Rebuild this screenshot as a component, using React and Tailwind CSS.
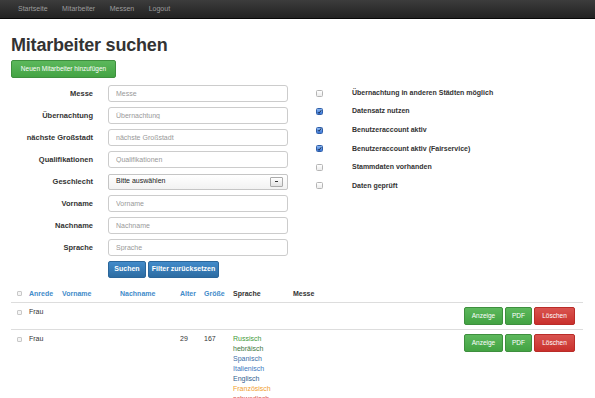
const fields = [
  { label: 'Messe', placeholder: 'Messe' },
  { label: 'Übernachtung', placeholder: 'Übernachtung' },
  { label: 'nächste Großstadt', placeholder: 'nächste Großstadt' },
  { label: 'Qualifikationen', placeholder: 'Qualifikationen' },
  { label: 'Geschlecht', select: true },
  { label: 'Vorname', placeholder: 'Vorname' },
  { label: 'Nachname', placeholder: 'Nachname' },
  { label: 'Sprache', placeholder: 'Sprache' },
];

const options = [
  { label: 'Übernachtung in anderen Städten möglich', checked: false },
  { label: 'Datensatz nutzen', checked: true },
  { label: 'Benutzeraccount aktiv', checked: true },
  { label: 'Benutzeraccount aktiv (Fairservice)', checked: true },
  { label: 'Stammdaten vorhanden', checked: false },
  { label: 'Daten geprüft', checked: false },
];

const languages = [
  { name: 'Russisch', color: 'text-[#3f9a3a]' },
  { name: 'hebräisch', color: 'text-[#3c763d]' },
  { name: 'Spanisch', color: 'text-[#3a6ea8]' },
  { name: 'Italienisch', color: 'text-[#3a78c0]' },
  { name: 'Englisch', color: 'text-[#31608f]' },
  { name: 'Französisch', color: 'text-[#f0a030]' },
  { name: 'schwedisch', color: 'text-[#d9534f]' },
];

function MacCheckbox({ checked }) {
  if (!checked) {
    return (
      <span className="block w-[7px] h-[7px] rounded-[1.5px] border border-[#b5b5b5] bg-gradient-to-b from-white to-[#ececec]" />
    );
  }
  return (
    <span className="flex items-center justify-center w-[7px] h-[7px] rounded-[1.5px] border border-[#2f5ea8] bg-gradient-to-b from-[#8ab6f0] to-[#3b76d6]">
      <svg viewBox="0 0 8 8" className="w-[6px] h-[6px]">
        <path d="M1.5 4.2 L3.3 6 L6.8 1.2" fill="none" stroke="#14233f" strokeWidth="1.4" />
      </svg>
    </span>
  );
}

function TinyBox() {
  return <span className="block w-[5px] h-[5px] border border-[#c8c8c8] bg-[#f5f5f5] rounded-[1px]" />;
}

function ActionButtons() {
  return (
    <div className="flex justify-end gap-[2px] pr-[8px]">
      <button className="w-[39px] h-[18px] rounded-[2px] bg-gradient-to-b from-[#5cb85c] to-[#43a343] border border-[#3e8f3e] text-white text-[6.5px]">
        Anzeige
      </button>
      <button className="w-[27px] h-[18px] rounded-[2px] bg-gradient-to-b from-[#5cb85c] to-[#43a343] border border-[#3e8f3e] text-white text-[6.5px]">
        PDF
      </button>
      <button className="w-[41px] h-[18px] rounded-[2px] bg-gradient-to-b from-[#d9534f] to-[#c9302c] border border-[#b92c28] text-white text-[6.5px]">
        Löschen
      </button>
    </div>
  );
}

export default function App() {
  return (
    <div className="w-[595px] h-[398px] overflow-hidden bg-white text-[#333] font-['Liberation_Sans',Arial,sans-serif]">
      {/* Navbar */}
      <nav className="h-[19px] bg-gradient-to-b from-[#3c3c3c] to-[#222] border-b border-[#080808] flex items-center pl-[18px] gap-[14.5px] text-[7px] text-[#9d9d9d]">
        <span>Startseite</span>
        <span>Mitarbeiter</span>
        <span>Messen</span>
        <span>Logout</span>
      </nav>

      <div className="px-[11px]">
        <h1 className="mt-[17px] text-[18px] leading-[18px] font-bold tracking-[-0.2px] text-[#333]">
          Mitarbeiter suchen
        </h1>
        <button className="mt-[5px] w-[105px] h-[18px] rounded-[2px] bg-gradient-to-b from-[#5cb85c] to-[#43a343] border border-[#3e8f3e] text-white text-[6.5px]">
          Neuen Mitarbeiter hinzufügen
        </button>

        {/* Search form */}
        <div className="flex mt-[7px]">
          <div className="w-[290px] flex flex-col gap-[5px]">
            {fields.map(f => (
              <div key={f.label} className="flex items-center h-[17px]">
                <label className="w-[82px] text-right text-[7.5px] font-bold text-[#333]">
                  {f.label}
                </label>
                {f.select ? (
                  <div className="ml-[15px] w-[180px] h-[16px] border border-[#c5c5c5] rounded-[2px] bg-gradient-to-b from-white to-[#f2f2f2] flex items-center justify-between pl-[7px] pr-[4px] text-[7px] text-[#222]">
                    <span>Bitte auswählen</span>
                    <span className="w-[13px] h-[10px] border border-[#aaa] rounded-[1px] bg-gradient-to-b from-white to-[#e2e2e2] flex items-center justify-center">
                      <span className="block w-[3px] h-[1.5px] bg-[#333]" />
                    </span>
                  </div>
                ) : (
                  <input
                    placeholder={f.placeholder}
                    className="ml-[15px] w-[180px] h-[17px] border border-[#ccc] rounded-[3px] px-[7px] text-[7px] placeholder:text-[#999] outline-none"
                  />
                )}
              </div>
            ))}
            <div className="flex gap-[2px] ml-[97px]">
              <button className="w-[38px] h-[17px] rounded-[2px] bg-gradient-to-b from-[#428bca] to-[#2d6ca2] border border-[#2b669a] text-white text-[7px] font-bold">
                Suchen
              </button>
              <button className="w-[71px] h-[17px] rounded-[2px] bg-gradient-to-b from-[#428bca] to-[#2d6ca2] border border-[#2b669a] text-white text-[7px] font-bold">
                Filter zurücksetzen
              </button>
            </div>
          </div>

          <div className="ml-[15px] mt-[3px] flex flex-col gap-[8.6px]">
            {options.map(o => (
              <div key={o.label} className="flex items-center h-[10px]">
                <MacCheckbox checked={o.checked} />
                <span className="ml-[29px] text-[7px] font-bold text-[#333]">{o.label}</span>
              </div>
            ))}
          </div>
        </div>

        {/* Results table */}
        <table className="mt-[8px] w-[572px] table-fixed border-collapse text-[7px]">
          <colgroup>
            <col className="w-[18px]" />
            <col className="w-[33px]" />
            <col className="w-[58px]" />
            <col className="w-[60px]" />
            <col className="w-[24px]" />
            <col className="w-[29px]" />
            <col className="w-[60px]" />
            <col className="w-[80px]" />
            <col />
          </colgroup>
          <thead>
            <tr className="border-b border-[#ddd] h-[16px] text-left font-bold">
              <th className="pl-[6px] align-middle"><TinyBox /></th>
              <th className="text-[#428bca]">Anrede</th>
              <th className="text-[#428bca]">Vorname</th>
              <th className="text-[#428bca]">Nachname</th>
              <th className="text-[#428bca]">Alter</th>
              <th className="text-[#428bca]">Größe</th>
              <th className="text-[#333]">Sprache</th>
              <th className="text-[#333]">Messe</th>
              <th />
            </tr>
          </thead>
          <tbody className="leading-[10px]">
            <tr className="border-b border-[#ddd] align-top">
              <td className="pl-[6px] pt-[7px]"><TinyBox /></td>
              <td className="pt-[4px]">Frau</td>
              <td />
              <td />
              <td />
              <td />
              <td />
              <td />
              <td className="pt-[4px] pb-[4px]"><ActionButtons /></td>
            </tr>
            <tr className="align-top">
              <td className="pl-[6px] pt-[7px]"><TinyBox /></td>
              <td className="pt-[4px]">Frau</td>
              <td />
              <td />
              <td className="pt-[4px]">29</td>
              <td className="pt-[4px]">167</td>
              <td className="pt-[4px]">
                {languages.map(l => (
                  <div key={l.name} className={l.color}>{l.name}</div>
                ))}
              </td>
              <td />
              <td className="pt-[4px]"><ActionButtons /></td>
            </tr>
          </tbody>
        </table>
      </div>
    </div>
  );
}
